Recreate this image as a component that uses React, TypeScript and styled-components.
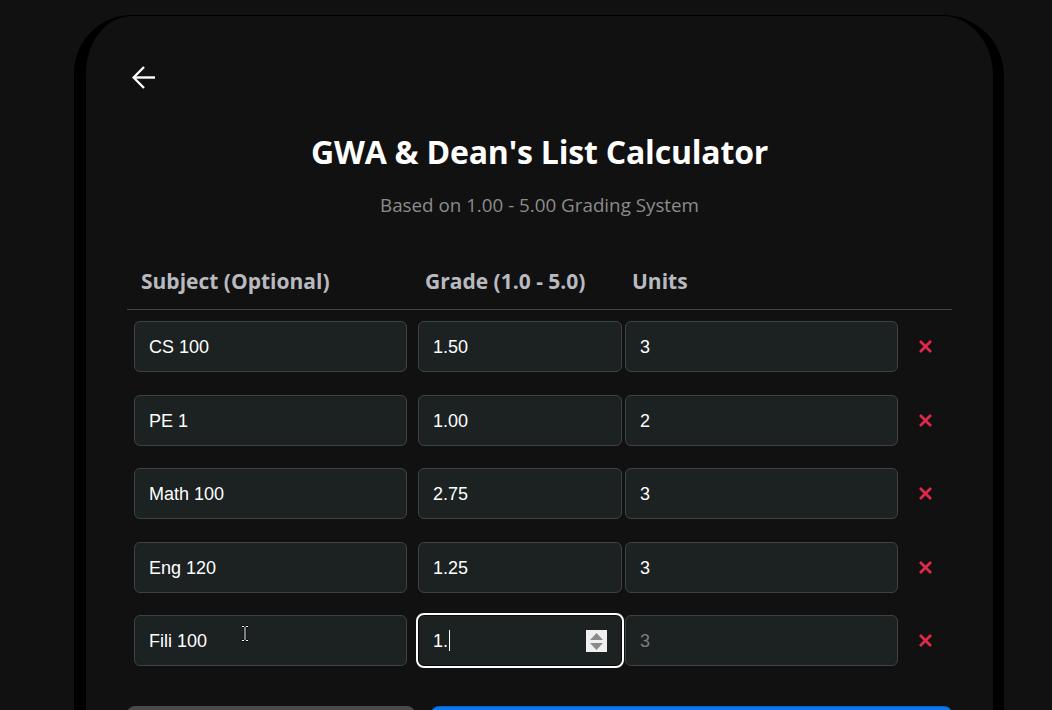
import React from "react";
import styled, { createGlobalStyle } from "styled-components";

const GlobalStyle = createGlobalStyle`
  html, body {
    margin: 0;
    padding: 0;
    background: #111111;
    overflow: hidden;
  }
  body {
    font-family: "Open Sans", "Noto Sans", sans-serif;
    color: #ffffff;
  }
  * { box-sizing: border-box; }
`;

const Page = styled.div`
  width: 1052px;
  height: 710px;
  padding-top: 15px;
  overflow: hidden;
`;

const Card = styled.div`
  margin-left: 74px;
  width: 930px;
  min-height: 760px;
  border-style: solid;
  border-color: #000000;
  border-width: 1px 11px 0 12px;
  border-radius: 58px 61px 0 0;
  padding: 50px 41px 0 41px;
`;

const BackButton = styled.button`
  display: block;
  margin-left: 5px;
  padding: 0;
  width: 24px;
  height: 23px;
  border: none;
  background: transparent;
  color: #ffffff;
  cursor: pointer;
`;

const Title = styled.h1`
  margin: 44px 0 0 0;
  text-align: center;
  font-family: "Open Sans", "Noto Sans", sans-serif;
  font-size: 32px;
  font-weight: 700;
  line-height: 38px;
  letter-spacing: -0.2px;
  color: #ffffff;
`;

const Subtitle = styled.p`
  margin: 23px 0 0 0;
  text-align: center;
  font-family: "Open Sans", "Noto Sans", sans-serif;
  font-size: 18.8px;
  line-height: 22px;
  color: #8c8c8c;
`;

const Grid = styled.div`
  display: grid;
  grid-template-columns: 284px 207px 276px 1fr;
  padding-left: 7px;
  align-items: center;
`;

const HeaderRow = styled(Grid)`
  margin-top: 53px;
  padding-bottom: 16px;
  border-bottom: 1px solid #444444;
`;

const HeaderLabel = styled.div`
  padding-left: 7px;
  font-family: "Open Sans", "Noto Sans", sans-serif;
  font-size: 21px;
  font-weight: 700;
  line-height: 24px;
  white-space: nowrap;
  color: #b9b9c0;
`;

const Rows = styled.div`
  display: flex;
  flex-direction: column;
  gap: 22.5px;
  margin-top: 11px;
`;

const FieldWrap = styled.div<{ $w: number }>`
  position: relative;
  width: ${(p) => p.$w}px;
  height: 51px;
`;

const Input = styled.input<{ $focused?: boolean }>`
  width: 100%;
  height: 100%;
  padding: 0 15px 0 14px;
  border-radius: 6px;
  border: 1px solid ${(p) => (p.$focused ? "#0a0a0a" : "#3d4343")};
  outline: ${(p) => (p.$focused ? "2px solid #ffffff" : "none")};
  background: #1c2121;
  color: #ffffff;
  font-family: "Liberation Sans", Arial, sans-serif;
  font-size: 18px;
  padding-top: 2px;
  &::placeholder {
    color: #7d7d7d;
  }
`;

const Spinner = styled.div`
  position: absolute;
  right: 15px;
  top: 15px;
  width: 21px;
  height: 22px;
  background: #efefef;
  display: flex;
  flex-direction: column;
  align-items: center;
  justify-content: center;
  gap: 3px;
`;

const Caret = styled.span`
  position: absolute;
  left: 31px;
  top: 15px;
  width: 1px;
  height: 21px;
  background: #ffffff;
`;

const IBeam = styled.svg`
  position: absolute;
  left: 107px;
  top: 10px;
`;

const DeleteButton = styled.button`
  justify-self: center;
  margin-left: -2px;
  width: 24px;
  height: 24px;
  padding: 0;
  border: none;
  background: transparent;
  display: flex;
  align-items: center;
  justify-content: center;
  cursor: pointer;
`;

const Actions = styled.div`
  display: flex;
  gap: 16px;
  margin-top: 40px;
`;

const ActionButton = styled.button<{ $primary?: boolean }>`
  flex: ${(p) => (p.$primary ? "0 0 521px" : "0 0 288px")};
  height: 52px;
  border: none;
  border-top: 1px solid ${(p) => (p.$primary ? "#0a5fc0" : "#474747")};
  border-radius: 8px;
  background: ${(p) => (p.$primary ? "#0b7af2" : "#4b4b4b")};
`;

const ArrowBack = () => (
  <svg width="24" height="23" viewBox="0 0 24 23" fill="none" stroke="#ffffff" strokeWidth="2.4">
    <path d="M23 11.5H2" />
    <path d="M12 1L1.6 11.5L12 22" />
  </svg>
);

const XIcon = () => (
  <svg width="13" height="13" viewBox="0 0 13 13" stroke="#e0284a" strokeWidth="2.8" strokeLinecap="butt">
    <path d="M1 1L12 12M12 1L1 12" />
  </svg>
);

type RowData = { subject: string; grade: string; units: string };

const rows: RowData[] = [
  { subject: "CS 100", grade: "1.50", units: "3" },
  { subject: "PE 1", grade: "1.00", units: "2" },
  { subject: "Math 100", grade: "2.75", units: "3" },
  { subject: "Eng 120", grade: "1.25", units: "3" },
  { subject: "Fili 100", grade: "1.", units: "" },
];

export default function App() {
  return (
    <>
      <GlobalStyle />
      <Page>
        <Card>
          <BackButton aria-label="Back">
            <ArrowBack />
          </BackButton>
          <Title>GWA &amp; Dean's List Calculator</Title>
          <Subtitle>Based on 1.00 - 5.00 Grading System</Subtitle>
          <HeaderRow>
            <HeaderLabel>Subject (Optional)</HeaderLabel>
            <HeaderLabel>Grade (1.0 - 5.0)</HeaderLabel>
            <HeaderLabel>Units</HeaderLabel>
            <div />
          </HeaderRow>
          <Rows>
            {rows.map((r, i) => {
              const last = i === rows.length - 1;
              return (
                <Grid key={i}>
                  <FieldWrap $w={273}>
                    <Input defaultValue={r.subject} placeholder="e.g. Math 101" />
                    {last && (
                      <IBeam width="8" height="17" viewBox="0 0 8 17">
                        <path d="M1 1.5H3M5 1.5H7M4 2V15M1 15.5H3M5 15.5H7" stroke="#000" strokeWidth="2.5" />
                        <path d="M1 1.5H3M5 1.5H7M4 2V15M1 15.5H3M5 15.5H7" stroke="#fff" strokeWidth="1" />
                      </IBeam>
                    )}
                  </FieldWrap>
                  <FieldWrap $w={204}>
                    <Input defaultValue={r.grade} $focused={last} />
                    {last && (
                      <>
                        <Caret />
                        <Spinner>
                          <svg width="13" height="7" viewBox="0 0 13 7">
                            <path d="M6.5 0L13 7H0Z" fill="#8a8a8a" />
                          </svg>
                          <svg width="13" height="7" viewBox="0 0 13 7">
                            <path d="M0 0H13L6.5 7Z" fill="#8a8a8a" />
                          </svg>
                        </Spinner>
                      </>
                    )}
                  </FieldWrap>
                  <FieldWrap $w={273}>
                    <Input defaultValue={r.units} placeholder="3" />
                  </FieldWrap>
                  <DeleteButton aria-label="Remove">
                    <XIcon />
                  </DeleteButton>
                </Grid>
              );
            })}
          </Rows>
          <Actions>
            <ActionButton aria-label="Add Subject" />
            <ActionButton aria-label="Calculate GWA" $primary />
          </Actions>
        </Card>
      </Page>
    </>
  );
}
